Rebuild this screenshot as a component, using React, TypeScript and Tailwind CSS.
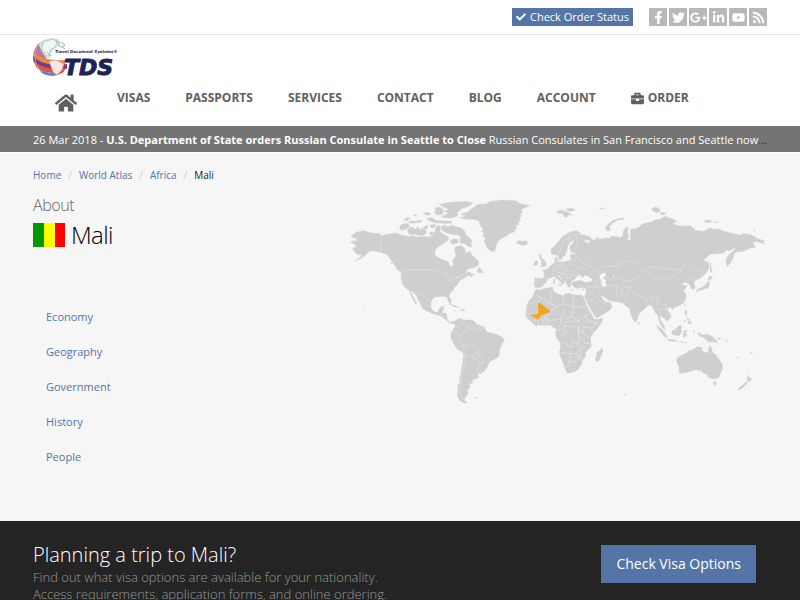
import {
  FaBriefcase, FaCheck, FaFacebookF, FaGooglePlusG, FaHome, FaLinkedinIn, FaRss, FaTwitter, FaYoutube
} from "react-icons/fa";

const navLinks = ["Visas", "Passports", "Services", "Contact", "Blog", "Account"];

const topics = ["Economy", "Geography", "Government", "History", "People"];

const crumbs = ["Home", "World Atlas", "Africa"];

const socials = [
  { name: "Facebook", icon: FaFacebookF },
  { name: "Twitter", icon: FaTwitter },
  { name: "Google Plus", icon: FaGooglePlusG },
  { name: "LinkedIn", icon: FaLinkedinIn },
  { name: "YouTube", icon: FaYoutube },
  { name: "RSS", icon: FaRss },
];

function Logo() {
  return (
    <svg width="96" height="45" viewBox="0 0 96 45" role="img" aria-label="Travel Document Systems">
      <defs>
        <clipPath id="globe">
          <circle cx="19" cy="21" r="19" />
        </clipPath>
      </defs>
      <g clipPath="url(#globe)">
        <path d="M0 0H38V41H0Z" fill="#fff" />
        <path d="M4 9C10 1 20-1 27 3L24 11 16 18 18 22H10L3 17Z" fill="#cfe6da" />
        <path d="M0 10L5 7 9 16 14 23 8 22 0 17Z" fill="#b778a0" />
        <path d="M0 15C7 22 16 25 32 24V29C18 31 7 28 0 21Z" fill="#e8864a" />
        <path d="M0 20C8 28 18 30 34 28V33C18 35 8 32 0 26Z" fill="#6d3f86" />
        <path d="M1 25C9 32 19 34 33 32L30 37C18 38 9 36 3 31Z" fill="#d9573f" />
        <path d="M4 31C12 37 20 38 29 37L22 41H12Z" fill="#6a83bd" />
        <path d="M10 6L20 3 24 7 22 11 17 14 17 19 14 20 9 13Z" fill="#f0f7f3" stroke="#8fb3b0" strokeWidth="0.6" />
        <path d="M16 25L23 24 31 28 29 34 24 39 20 36Z" fill="#f6e6e2" stroke="#c98f94" strokeWidth="0.6" />
        <path d="M23 5L27 7 25 9 29 11M28 6L32 9 29 11 32 13M14 16L18 20" fill="none" stroke="#7b9b98" strokeWidth="0.8" />
      </g>
      <path d="M7 7C0 15 0 28 9 36" fill="none" stroke="#c9a0b4" strokeWidth="1" />
      <text x="22" y="17" fill="#1d2455" fontFamily="DejaVu Sans" fontWeight="bold" fontStyle="italic" fontSize="4">
        Travel Document Systems®
      </text>
      <text x="31" y="39" fill="#1d2455" stroke="#1d2455" strokeWidth="1" fontFamily="DejaVu Sans" fontWeight="bold" fontStyle="italic" fontSize="22">
        TDS
      </text>
    </svg>
  );
}

function WorldMap() {
  return (
    <svg className="w-full h-auto" viewBox="0 0 1281 660" role="img" aria-label="World map with Mali highlighted">
      <g fill="#cfcfcf" stroke="#cfcfcf" strokeWidth="1" strokeLinejoin="round">
        {/* North America */}
        <path d="M30 139L45 127 68 123 90 129 118 132 122 138 140 133 155 132 162 129 180 135 205 140 215 137 230 142 250 139 262 142 275 138 283 126 285 114 292 105 300 112 298 126 310 135 322 141 324 150 310 160 295 168 282 182 284 198 300 207 322 215 328 228 333 230 338 226 336 212 346 198 342 182 344 170 362 168 372 175 376 190 388 184 396 198 410 210 415 218 412 228 400 233 382 238 374 250 388 246 392 252 402 254 390 262 386 256 376 262 365 268 356 274 350 285 340 294 338 302 328 310 325 318 332 334 329 344 324 338 318 322 300 320 282 322 272 332 270 352 275 362 283 368 292 366 297 354 310 349 308 361 303 368 318 372 319 388 328 397 341 394 345 400 332 403 316 391 302 380 280 373 262 366 247 359 240 345 232 328 224 314 214 306 202 302 186 285 180 265 182 246 168 236 158 222 148 208 140 195 122 189 106 184 95 182 84 185 74 196 60 206 40 215 58 202 64 196 48 193 38 183 35 176 46 170 40 162 28 158 38 152 48 154 46 147Z" />
        <path d="M206 306L211 309 220 326 228 341 224 342 214 325Z" />
        <path d="M148 218L153 220 151 223ZM165 234L173 240 180 245 171 242Z" />
        {/* Arctic islands and Greenland */}
        <path d="M280 56L292 51 304 55 309 64 304 73 291 75 280 68 286 62Z" />
        <path d="M296 43L322 38 350 35 385 35 397 40 383 50 364 56 350 68 350 78 334 84 310 84 302 79 325 70 311 65 326 58 308 51Z" />
        <path d="M176 113L184 102 200 101 207 108 196 118 180 121ZM200 121L206 113 216 112 222 118 232 110 237 120 246 114 257 125 255 132 240 137 220 134 205 134ZM189 90L200 83 209 84 197 93ZM202 96L216 92 224 95 238 90 244 96 222 99 206 99ZM217 75L228 74 224 79ZM246 70L261 67 272 72 258 76ZM259 86L274 83 286 92 332 94 334 100 310 101 280 98 262 92ZM248 112L260 106 262 116 254 119ZM268 105L284 104 283 112 271 114ZM268 126L278 128 276 135 266 134Z" />
        <path d="M302 109L314 106 322 111 332 105 346 110 362 114 373 125 376 136 388 145 396 155 391 158 393 172 384 170 373 162 360 160 356 149 363 144 352 135 338 134 324 132 314 128 303 119Z" />
        <path d="M328 154L338 147 350 148 354 158 344 160 336 164ZM411 238L418 233 421 241 428 246 425 250 410 247Z" />
        <path d="M357 84L376 78 362 73 380 67 396 55 411 44 435 42 450 34 490 30 530 33 535 40 568 47 552 54 543 59 545 70 537 73 544 78 536 84 540 92 532 96 536 104 523 108 530 114 520 121 524 126 509 130 496 140 482 146 471 156 466 170 463 185 453 184 442 177 436 166 431 154 434 146 427 137 431 129 422 126 428 118 418 106 416 94 400 88 376 87Z" />
        <path d="M529 155L538 152 544 155 556 152 563 157 558 164 546 167 536 163 530 161Z" />
        {/* Europe and Asia */}
        <path d="M583 265L608 266 613 253 607 242 620 238 627 232 635 224 643 217 643 204 649 201 650 212 658 216 672 216 688 212 692 206 690 195 712 190 694 188 689 178 690 168 702 155 698 151 690 158 682 168 680 180 676 194 666 204 662 210 656 206 651 195 638 195 632 190 632 178 642 170 652 158 665 142 680 131 695 125 708 123 720 128 718 134 730 135 750 142 754 148 745 152 730 149 739 160 748 157 752 148 765 151 768 142 776 144 774 149 800 144 806 147 815 139 828 140 840 143 848 137 850 123 858 112 865 114 862 128 866 138 862 148 868 153 872 146 870 135 872 118 882 116 882 122 888 115 900 110 902 105 915 100 935 96 945 90 955 89 965 86 975 79 990 85 1003 88 1010 95 998 100 1008 106 1030 109 1050 107 1062 115 1066 123 1078 122 1090 125 1102 118 1108 114 1124 118 1140 118 1150 124 1170 128 1190 134 1207 136 1208 131 1228 134 1240 138 1252 146 1275 153 1270 157 1276 162 1258 158 1250 154 1240 158 1242 166 1248 172 1230 175 1218 181 1205 186 1190 186 1182 193 1180 206 1173 218 1162 230 1158 218 1160 205 1170 192 1180 184 1188 174 1178 177 1168 184 1163 180 1150 190 1130 191 1110 193 1102 201 1088 214 1104 216 1108 232 1100 248 1090 258 1080 266 1068 270 1062 278 1066 294 1058 300 1052 294 1050 284 1040 280 1034 276 1025 286 1042 288 1036 296 1030 302 1038 314 1038 326 1032 338 1022 346 1008 352 998 355 986 352 982 360 990 372 994 380 987 390 979 395 976 389 968 383 961 378 959 388 967 400 973 409 975 420 967 414 960 402 955 388 953 376 946 370 942 360 932 345 922 348 914 357 902 367 895 378 891 392 884 398 877 386 871 370 868 355 858 350 850 341 832 336 810 334 797 326 786 318 782 320 792 334 800 338 806 336 816 348 810 360 795 370 770 385 765 382 757 368 746 350 736 328 732 322 737 310 738 296 722 293 713 297 701 292 692 283 697 277 708 274 722 272 735 278 752 276 758 270 748 262 735 256 726 264 720 255 710 258 704 268 694 274 690 279 692 288 686 294 680 286 675 277 665 266 658 258 651 257 661 267 673 275 668 284 665 282 661 275 650 268 642 259 632 264 622 266 620 274 612 282 605 291 592 294 583 292 582 280Z" />
        <path d="M597 195L603 194 602 204 612 211 618 221 616 229 598 232 606 225 600 220 606 215 599 209ZM582 216L590 212 592 221 588 227 580 228ZM652 206L658 206 656 212ZM652 284L664 283 662 289ZM639 268L643 267 644 280 639 281ZM690 301L700 301 693 304ZM724 299L732 297 728 302Z" />
        {/* Arctic Russia, Svalbard */}
        <path d="M650 64L665 61 680 66 690 71 678 82 672 81 667 70 653 71ZM676 57L695 55 706 60 692 65 680 62ZM688 73L696 73 693 78ZM776 56L793 54 788 58ZM797 121L795 114 806 101 818 92 836 86 852 84 830 92 816 100 808 110 811 123ZM936 56L944 51 956 54 961 64 950 69 938 62ZM960 70L970 67 980 71 964 75ZM1093 93L1104 90 1118 94 1108 98 1097 97ZM1124 97L1136 96 1130 99ZM1240 122L1248 121 1244 124ZM840 88L852 86 846 90Z" />
        {/* Japan and Sakhalin */}
        <path d="M1111 218L1114 220 1112 232 1118 240 1112 250 1110 238ZM1106 262L1112 259 1119 264 1110 270 1104 270ZM1107 272L1109 283 1105 295 1094 297 1088 301 1074 303 1070 308 1072 298 1086 294 1092 288 1100 284 1103 276Z" />
        <path d="M1035 340L1037 348 1034 350ZM994 357L1001 355 998 361ZM893 395L898 402 894 406Z" />
        {/* South East Asia */}
        <path d="M948 407L958 412 970 424 980 438 982 446 972 440 960 424ZM982 449L998 450 1012 455 1000 456 985 453ZM995 424L1006 420 1018 408 1026 410 1022 420 1026 426 1018 438 1006 438 996 434ZM1031 425L1044 422 1036 428 1041 438 1036 437 1034 446 1030 440ZM1035 363L1041 362 1040 374 1044 380 1036 375ZM1044 395L1054 396 1052 404 1044 402ZM1040 385L1046 387 1050 392 1044 391ZM1030 398L1036 390 1034 397ZM1018 456L1030 457 1042 460 1028 459ZM1061 421L1065 424 1062 430ZM1072 431L1082 430 1086 438 1094 434 1108 436 1120 442 1128 452 1134 461 1122 456 1110 458 1101 454 1092 444 1080 440ZM1132 447L1144 444 1138 450ZM1156 450L1164 456 1160 456Z" />
        {/* Oceania */}
        <path d="M1010 506L1024 497 1038 492 1046 483 1058 481 1064 478 1070 472 1088 474 1086 483 1098 490 1104 490 1109 468 1114 474 1118 488 1128 496 1138 510 1148 525 1148 538 1142 552 1136 565 1120 569 1106 564 1098 552 1092 552 1084 545 1068 540 1050 546 1038 550 1020 552 1017 546 1018 534 1011 518ZM1120 578L1130 578 1127 588 1122 586ZM1222 556L1228 563 1236 568 1228 577 1222 576 1224 566ZM1219 577L1222 582 1210 594 1198 602 1196 596 1208 588ZM1188 501L1198 506 1196 508ZM1230 489L1238 488 1234 492ZM852 614L858 615 854 618Z" />
        <path d="M68 356L71 357 69 359Z" />
        {/* Central and South America */}
        <path d="M326 344L345 348 356 354 342 352ZM358 360L370 359 374 362 362 364ZM340 362L346 363 342 365Z" />
        <path d="M342 396L349 389 360 386 370 391 388 391 400 394 407 404 420 408 432 413 437 426 455 431 472 436 488 445 491 452 484 466 478 478 475 500 463 509 448 516 441 530 430 546 420 553 410 551 414 562 408 569 396 571 396 580 387 583 388 594 379 602 383 613 374 624 370 632 380 641 370 642 356 632 350 618 352 600 351 590 358 580 357 570 362 545 366 520 369 497 364 487 350 480 340 464 331 446 331 434 334 424 343 412ZM400 625L411 624 405 627Z" />
      </g>
      {/* Africa */}
      <g transform="translate(510 270)">
        <path fill="#cfcfcf" d="M77 29L90 30 102 26 128 22 130 34 138 40 158 48 164 42 176 40 190 45 214 46 220 52 228 72 234 88 244 104 252 119 264 119 279 114 276 127 262 146 250 160 242 172 242 186 244 200 230 214 226 222 227 232 218 240 214 256 204 270 192 278 172 282 166 274 160 255 152 236 146 218 151 204 148 188 138 174 135 164 137 148 128 144 122 137 100 138 88 136 76 139 64 128 50 116 45 104 48 92 47 80 58 60 68 50 71 38ZM275 203L279 214 272 232 266 245 258 246 255 236 260 227 258 219 268 214Z" />
        <path fill="none" stroke="#f0f0f0" strokeWidth="1.5" d="M72 46L94 54 84 69 70 66 48 80M84 69L82 104 62 105 48 100M94 54L120 72 138 82 120 95M120 30L124 45 122 60 120 72M138 82L162 72 156 48M162 72L190 82M188 46L190 82 184 112 158 120M190 82L230 82M162 80L158 106 150 120 152 132 140 144M120 95L118 106 104 112 116 124 150 118M82 120L84 136M94 112L98 136M104 112L108 136M116 124L116 136M74 118L70 128M152 132L176 124 206 128M184 112L206 124 224 110 240 98M206 128L222 142 242 146 250 160M224 110L232 124 262 130 242 146M136 152L160 148 164 138 206 142 204 172M222 142L216 160 240 178M148 188L166 188 170 200 186 204 184 186 204 190 208 172M146 220L182 222 196 222 208 208 228 200M204 172L220 178 224 192 242 192M182 222L176 246 176 258 164 262M176 246L192 248 206 236 198 222M206 236L214 242M208 208L212 220 206 236M150 172L164 162 164 148M196 190L206 204M206 142L204 156 218 160" />
        <path fill="#f0a51e" d="M82 69L88 70 120 94 119 98 105 102 94 107 88 113 82 120 75 117 72 111 63 111 61 105 80 104 84 101Z" />
      </g>
      {/* Inland seas */}
      <path fill="#f6f6f6" d="M781 254L793 249 799 256 791 262 790 268 798 272 796 280 800 290 790 292 782 284 784 274 778 264ZM818 256L824 258 820 264Z" />
      {/* Country borders */}
      <g fill="none" stroke="#e6e6e6" strokeWidth="1.5">
        <path d="M120 133V187M182 241H280L300 244 318 252 324 262 322 274 340 266 356 262 368 254 378 250M206 305L228 310 242 314 256 328 270 336M294 369L298 378M306 366L302 376M318 376L308 382" />
        <path d="M362 388L366 404 382 412 378 426 366 424 362 440 344 424 334 430M366 404L344 412M382 412L398 422 404 406M404 420L414 424 418 410M414 424L426 420 432 414M362 440L356 454 370 466 370 488 374 502 398 502 412 486 406 474 392 468 370 466M374 502L368 540 362 580 358 610 370 634M398 502L418 520 428 518 420 504 410 488M418 520L412 536 428 548M412 536L410 551" />
        <path d="M656 194L660 180 668 160 682 142 700 134 718 134M684 142L688 160M700 134L712 150 710 170 700 184M706 190L712 206 722 216 736 224 754 232 764 246M690 210L710 214M668 216L666 232 678 242 702 244 716 254M643 217L650 228 640 240 648 248 664 250 690 254 712 258M666 232L650 228M678 242L664 250M612 266L628 262M640 240L634 258M660 252L676 262 694 266M676 262L680 278M690 254L694 274M682 222L706 226 720 236 742 238M768 268L786 276M738 292L760 290 780 292M764 270L770 288 778 310M760 290L754 308 742 318M754 308L780 334 800 340M740 326L754 332 790 360M776 262L772 240 790 230 820 228 836 232 836 216 856 212 890 222 914 240 900 256 886 268 864 274 852 288M800 264L820 270 838 260 852 274 870 270M800 286L828 288 842 298 860 292 878 290M828 288L830 318 838 334M842 298L852 308 842 320M868 292L878 310 892 318 916 326 936 324 952 322 960 342 976 344 986 352M868 292L860 320 848 340M916 326L922 346M936 324L932 344M952 322L950 342 958 358 962 376M958 358L976 358 984 378M976 344L980 362M918 236L946 230 980 238 1008 240 1024 238 1030 226 1050 220 1064 236 1080 244 1086 258M918 240L936 260 966 268 992 266 1018 248 1026 240M1038 276L1056 266 1068 268M1118 440V456M1016 420L1002 432M586 272L590 290M700 208L712 200M720 236L708 244" />
      </g>
    </svg>
  );
}

export default function App() {
  return (
    <div className="min-h-screen bg-[#f6f6f6] font-['Open_Sans',sans-serif] text-[#222]">
      <header className="bg-white">
        {/* Top bar */}
        <div className="flex h-[35px] items-center justify-end gap-4 border-b border-gray-200 px-[33px]">
          <button className="flex items-center gap-1 bg-[#5475a5] px-1 text-[11px] leading-[18px] text-white">
            <FaCheck size={10} />
            Check Order Status
          </button>
          <div className="flex gap-0.5">
            {socials.map(({ name, icon: Icon }) => (
              <a key={name} href="#" aria-label={name} className="flex size-[18px] items-center justify-center bg-[#b8b8b8] text-white">
                <Icon size={name === "Google Plus" ? 17 : 13} />
              </a>
            ))}
          </div>
        </div>

        <div className="px-[33px] pt-px">
          <a href="#" className="block w-fit">
            <Logo />
          </a>
          <nav className="flex h-[45px] items-start gap-[35px] pt-[7px] pl-[22px] text-xs leading-5 font-bold text-[#606060] uppercase">
            <a href="#" aria-label="Home" className="w-[27px] pt-1">
              <FaHome size={22} />
            </a>
            {navLinks.map((label) => (
              <a key={label} href="#">{label}</a>
            ))}
            <a href="#" className="flex items-center gap-1">
              <FaBriefcase size={13} />
              Order
            </a>
          </nav>
        </div>
      </header>

      {/* News ticker */}
      <div className="h-[27px] border-b border-white bg-[#747474] px-[33px]">
        <p className="truncate text-[11px] leading-[27px] text-[#333]">
          <a href="#" className="text-white">
            26 Mar 2018 - <b>U.S. Department of State orders Russian Consulate in Seattle to Close</b> Russian Consulates in San Francisco and Seattle now closed
          </a>
        </p>
      </div>

      <main className="flex min-h-[368px] px-[33px]">
        <div className="flex-1">
          <nav aria-label="Breadcrumb" className="flex gap-[7px] pt-3 text-[10px] leading-5">
            {crumbs.map((label) => (
              <span key={label} className="flex gap-[7px]">
                <a href="#" className="text-[#5475a5]">{label}</a>
                <span className="text-[#ccc]">/</span>
              </span>
            ))}
            <span>Mali</span>
          </nav>

          <h1 className="pt-2 font-light">
            <span className="block text-base leading-6 tracking-tight text-[#666]">About</span>
            <span className="flex items-center gap-1.5 text-2xl leading-9 tracking-tight text-black">
              <svg width="32" height="24" viewBox="0 0 32 24" aria-hidden="true">
                <path fill="#009a00" d="M0 0h11v24H0z" />
                <path fill="#ff0" d="M11 0h11v24H11z" />
                <path fill="#f00" d="M22 0h10v24H22z" />
              </svg>
              Mali
            </span>
          </h1>

          <ul className="space-y-[15px] pt-[54px] pl-[13px] text-[11px] leading-5">
            {topics.map((topic) => (
              <li key={topic}>
                <a href="#" className="text-[#5475a5]">{topic}</a>
              </li>
            ))}
          </ul>
        </div>

        <div className="w-[58%] pt-[37px]">
          <WorldMap />
        </div>
      </main>

      <section className="flex h-[79px] items-start justify-between overflow-hidden bg-[#242424] px-[33px] pt-5">
        <div className="font-light">
          <h2 className="text-xl leading-7 text-white">Planning a trip to Mali?</h2>
          <p className="text-[13px] leading-[17px] text-[#999]">
            Find out what visa options are available for your nationality.
            <br />
            Access requirements, application forms, and online ordering.
          </p>
        </div>
        <button className="mr-[11px] mt-1 bg-[#5475a5] px-[15px] text-sm leading-[38px] text-white">
          Check Visa Options
        </button>
      </section>
    </div>
  );
}
